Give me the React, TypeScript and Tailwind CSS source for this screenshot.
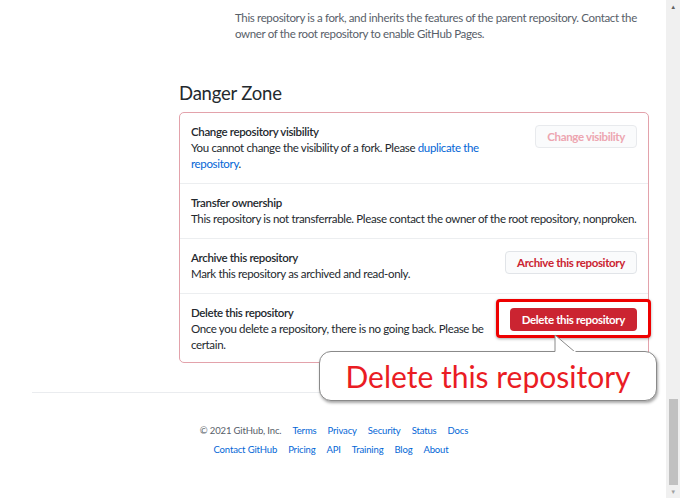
import React from 'react';

const font = { fontFamily: 'Lato, "Open Sans", sans-serif' };

const rows = [
  {
    title: 'Change repository visibility',
    desc: (
      <>
        You cannot change the visibility of a fork. Please{' '}
        <span className="text-[#0366d6]">duplicate the repository</span>.
      </>
    ),
    button: 'visibility',
  },
  {
    title: 'Transfer ownership',
    desc: 'This repository is not transferrable. Please contact the owner of the root repository, nonproken.',
    button: null,
  },
  {
    title: 'Archive this repository',
    desc: 'Mark this repository as archived and read-only.',
    button: 'archive',
  },
  {
    title: 'Delete this repository',
    desc: 'Once you delete a repository, there is no going back. Please be certain.',
    button: 'delete',
  },
];

const footerTop = ['Terms', 'Privacy', 'Security', 'Status', 'Docs'];
const footerBottom = ['Contact GitHub', 'Pricing', 'API', 'Training', 'Blog', 'About'];

const App: React.FC = () => {
  return (
    <div className="flex h-[498px] w-[680px] overflow-hidden bg-white text-[#24292e] tracking-[-0.35px]" style={font}>
      <div className="relative flex-1">
        <main className="ml-[179px] w-[470px] pt-[10px]">
          <p className="ml-[56px] w-[410px] text-[11.5px] leading-4 text-[#586069]">
            This repository is a fork, and inherits the features of the parent repository. Contact the owner of the root repository to enable GitHub Pages.
          </p>

          <h2 className="mt-[36px] text-[18.5px] leading-[30px] tracking-[-0.2px] text-[#24292e]">Danger Zone</h2>

          <div className="mt-[4px] rounded-[5px] border border-[#e3a2ab]">
            {rows.map((row, i) => (
              <div
                key={i}
                className={`flex items-start justify-between px-[11px] pt-[11px] ${i === 3 ? 'pb-[9px]' : 'pb-[11px]'} ${i > 0 ? 'border-t border-[#eceef0]' : ''}`}
              >
                <div className={row.button ? 'w-[296px]' : ''}>
                  <div className="text-[11.5px] font-semibold leading-4">{row.title}</div>
                  <div className="text-[11.5px] leading-4">{row.desc}</div>
                </div>
                {row.button === 'visibility' && (
                  <button className="mt-px h-[23px] whitespace-nowrap rounded-[4px] border border-[#e8eaed] bg-[#fafbfc] px-[11px] text-[11.5px] font-bold text-[#eda5b0]">
                    Change visibility
                  </button>
                )}
                {row.button === 'archive' && (
                  <button className="mt-px h-[23px] whitespace-nowrap rounded-[4px] border border-[#e1e4e8] bg-[#fafbfc] px-[11px] text-[11.5px] font-bold text-[#cb2431]">
                    Archive this repository
                  </button>
                )}
                {row.button === 'delete' && (
                  <div className="relative mt-px">
                    <button className="h-[23px] whitespace-nowrap rounded-[4px] bg-[#cb2431] px-[12px] text-[11.5px] font-bold text-white">
                      Delete this repository
                    </button>
                    <div className="pointer-events-none absolute -inset-x-[14px] -inset-y-[7px] rounded-[4px] border-[3px] border-[#ee0000] shadow-[0_1px_3px_rgba(0,0,0,0.35)]" />
                  </div>
                )}
              </div>
            ))}
          </div>
        </main>

        <div className="mx-[32px] mt-[29px] border-t border-[#eaecef]" />

        <footer className="mt-[28px] flex flex-col items-center text-[9.5px] leading-[19px] tracking-[-0.15px]">
          <div className="flex gap-[11px] pl-[2px]">
            <span className="text-[#586069]">© 2021 GitHub, Inc.</span>
            {footerTop.map((l) => (
              <span key={l} className="text-[#0366d6]">{l}</span>
            ))}
          </div>
          <div className="flex gap-[11px] pr-[4px]">
            {footerBottom.map((l) => (
              <span key={l} className="text-[#0366d6]">{l}</span>
            ))}
          </div>
        </footer>

        {/* callout */}
        <div className="absolute left-[319px] top-[351px] flex h-[50px] w-[338px] items-center justify-center rounded-[12px] border border-[#8a8a8a] bg-white shadow-[1px_2px_3px_rgba(0,0,0,0.35)]">
          <span className="text-[30px] leading-none tracking-[0px] text-[#ea1c24]">Delete this repository</span>
        </div>
        <svg className="absolute left-[553px] top-[334px]" width="26" height="19" viewBox="0 0 26 19">
          <path d="M2 18 L2 1 L22 18" fill="#fff" stroke="#8a8a8a" strokeWidth="1" />
          <rect x="2.5" y="17" width="20" height="3" fill="#fff" />
        </svg>
      </div>

      {/* scrollbar */}
      <div className="flex w-[14px] flex-col items-center bg-[#f0f0f0]">
        <span className="mt-[4px] text-[6px] leading-none text-[#606060]">▲</span>
        <div className="flex-1" />
        <div className="mb-[4px] h-[86px] w-[9px] bg-[#c1c1c1]" />
        <span className="mb-[3px] text-[6px] leading-none text-[#a0a0a0]">▼</span>
      </div>
    </div>
  );
};

export default App;
